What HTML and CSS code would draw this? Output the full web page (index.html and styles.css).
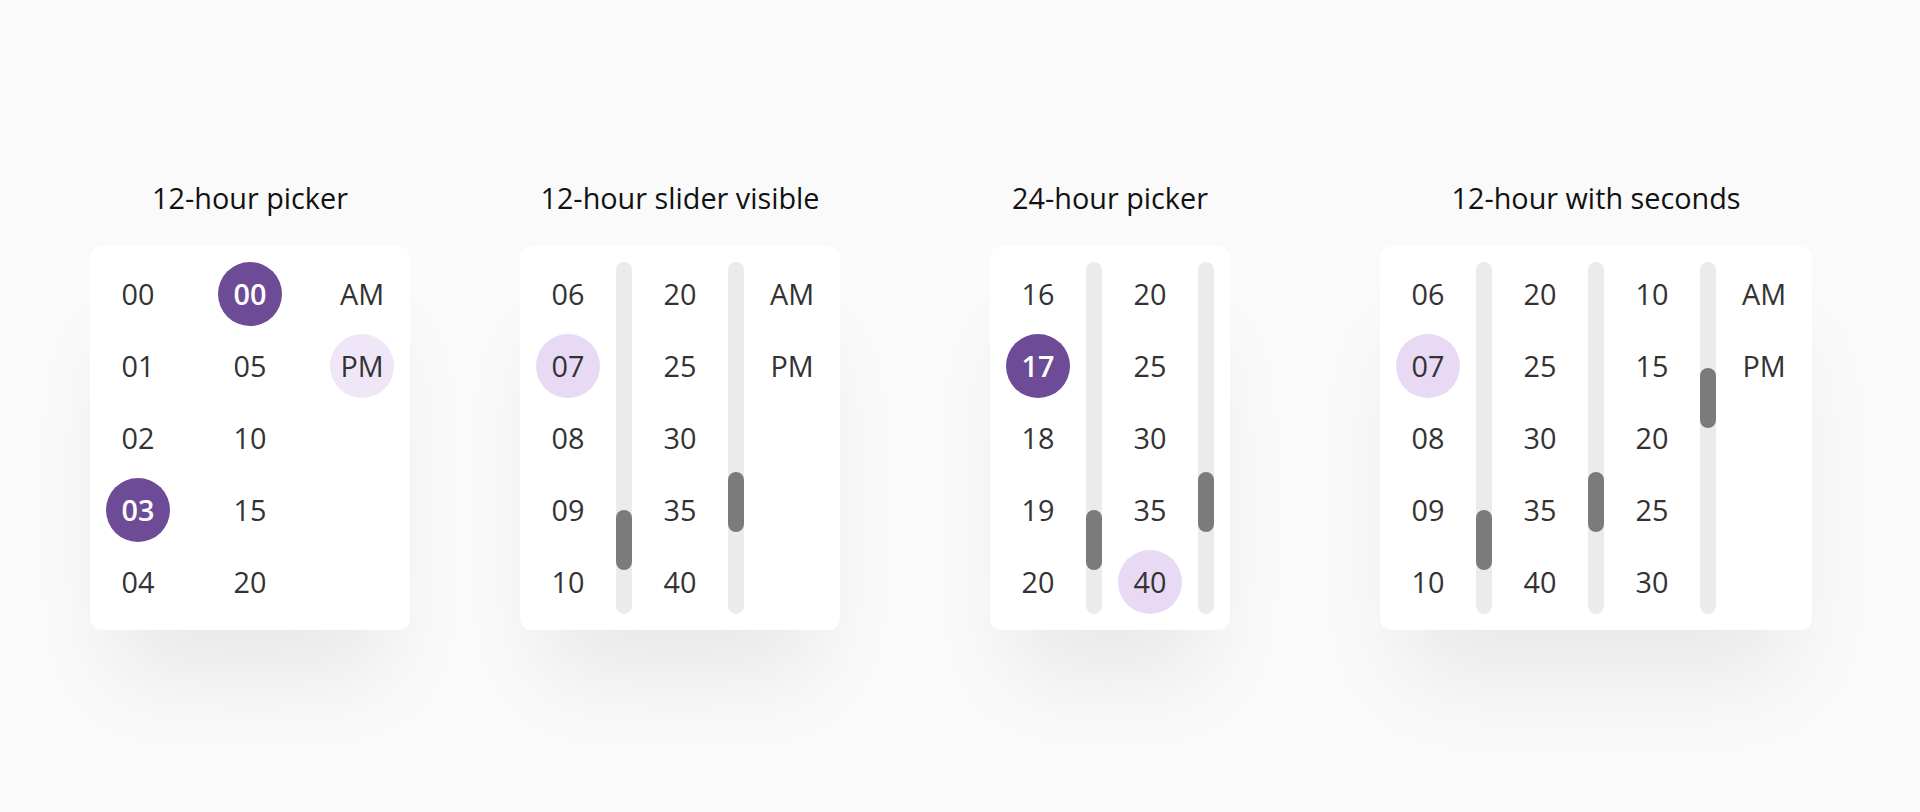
FILE: index.html
```html
<!DOCTYPE html>
<html lang="en">
<head>
  <meta charset="UTF-8">
  <meta name="viewport" content="width=device-width, initial-scale=1.0">
  <title>Time Pickers</title>
  <link rel="stylesheet" href="styles.css">
</head>
<body>
  <main class="demos">

    <!-- 12-hour, scrollbars hidden -->
    <section class="demo">
      <h2 class="demo-title">12-hour picker</h2>
      <div class="picker">
        <div class="column">
          <div class="cell">00</div>
          <div class="cell">01</div>
          <div class="cell">02</div>
          <div class="cell selected">03</div>
          <div class="cell">04</div>
        </div>
        <div class="scrollbar hidden"></div>
        <div class="column">
          <div class="cell selected">00</div>
          <div class="cell">05</div>
          <div class="cell">10</div>
          <div class="cell">15</div>
          <div class="cell">20</div>
        </div>
        <div class="scrollbar hidden"></div>
        <div class="column">
          <div class="cell">AM</div>
          <div class="cell hover">PM</div>
        </div>
      </div>
    </section>

    <!-- 12-hour with visible scrollbars -->
    <section class="demo">
      <h2 class="demo-title">12-hour slider visible</h2>
      <div class="picker">
        <div class="column">
          <div class="cell">06</div>
          <div class="cell focus">07</div>
          <div class="cell">08</div>
          <div class="cell">09</div>
          <div class="cell">10</div>
        </div>
        <div class="scrollbar"><div class="thumb" style="margin-top: 248px"></div></div>
        <div class="column">
          <div class="cell">20</div>
          <div class="cell">25</div>
          <div class="cell">30</div>
          <div class="cell">35</div>
          <div class="cell">40</div>
        </div>
        <div class="scrollbar"><div class="thumb" style="margin-top: 210px"></div></div>
        <div class="column">
          <div class="cell">AM</div>
          <div class="cell">PM</div>
        </div>
      </div>
    </section>

    <!-- 24-hour -->
    <section class="demo">
      <h2 class="demo-title">24-hour picker</h2>
      <div class="picker">
        <div class="column">
          <div class="cell">16</div>
          <div class="cell selected">17</div>
          <div class="cell">18</div>
          <div class="cell">19</div>
          <div class="cell">20</div>
        </div>
        <div class="scrollbar"><div class="thumb" style="margin-top: 248px"></div></div>
        <div class="column">
          <div class="cell">20</div>
          <div class="cell">25</div>
          <div class="cell">30</div>
          <div class="cell">35</div>
          <div class="cell focus">40</div>
        </div>
        <div class="scrollbar"><div class="thumb" style="margin-top: 210px"></div></div>
      </div>
    </section>

    <!-- 12-hour with seconds -->
    <section class="demo">
      <h2 class="demo-title">12-hour with seconds</h2>
      <div class="picker">
        <div class="column">
          <div class="cell">06</div>
          <div class="cell focus">07</div>
          <div class="cell">08</div>
          <div class="cell">09</div>
          <div class="cell">10</div>
        </div>
        <div class="scrollbar"><div class="thumb" style="margin-top: 248px"></div></div>
        <div class="column">
          <div class="cell">20</div>
          <div class="cell">25</div>
          <div class="cell">30</div>
          <div class="cell">35</div>
          <div class="cell">40</div>
        </div>
        <div class="scrollbar"><div class="thumb" style="margin-top: 210px"></div></div>
        <div class="column">
          <div class="cell">10</div>
          <div class="cell">15</div>
          <div class="cell">20</div>
          <div class="cell">25</div>
          <div class="cell">30</div>
        </div>
        <div class="scrollbar"><div class="thumb" style="margin-top: 106px"></div></div>
        <div class="column">
          <div class="cell">AM</div>
          <div class="cell">PM</div>
        </div>
      </div>
    </section>

  </main>
</body>
</html>
```

FILE: styles.css
```css
html, body { min-height: 100vh; }
body { margin: 0; background-color: #fafafa; font-family: 'Open Sans', 'Noto Sans', sans-serif; color: #333; }

.demos { display: flex; align-items: flex-start; gap: 110px; padding: 179px 90px 182px; }
.demo { min-width: 320px; display: flex; flex-direction: column; align-items: center; }
.demo-title { margin: 0 0 29px; font-size: 28.8px; line-height: 38px; font-weight: 400; color: #111; }

/* card holding the columns */
.picker { display: flex; gap: 16px; padding: 16px; background-color: #fff; border-radius: 12px; box-shadow: 0 70px 90px -24px rgba(0,0,0,0.075); }
.column { width: 64px; height: 352px; display: flex; flex-direction: column; gap: 8px; }
.cell { width: 64px; height: 64px; border-radius: 50%; text-align: center; font-size: 28.8px; line-height: 64px; color: #333; }
.cell.selected { background-color: #6d4b96; color: #fff; font-weight: 600; }
.cell.hover { background-color: #efe7f8; }
.cell.focus { background-color: #e8d9f5; }

/* custom scrollbar track + thumb */
.scrollbar { width: 16px; height: 352px; border-radius: 8px; background-color: #ebebeb; }
.scrollbar.hidden { visibility: hidden; }
.thumb { width: 16px; height: 60px; border-radius: 8px; background-color: #7b7b7b; }
```
